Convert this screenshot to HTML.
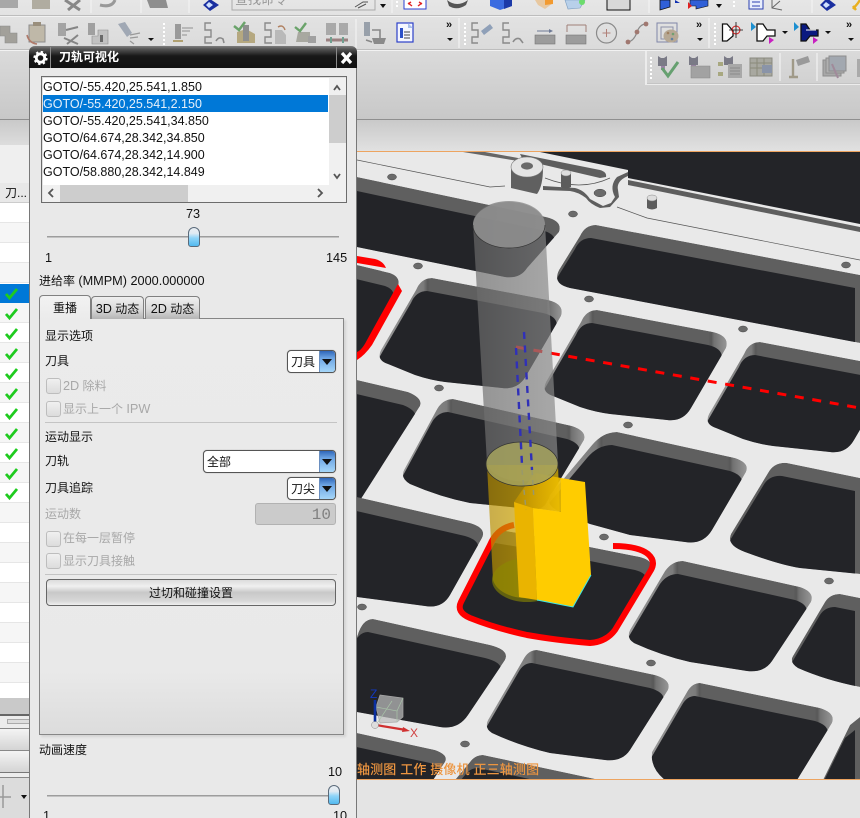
<!DOCTYPE html>
<html lang="zh">
<head>
<meta charset="utf-8">
<title>刀轨可视化</title>
<style>
html,body{margin:0;padding:0;background:#e0e0e0}
#page{position:relative;width:860px;height:818px;overflow:hidden;font-family:"Liberation Sans","Noto Sans CJK SC",sans-serif;font-size:12px;color:#111}
#page div,#page span{position:absolute;box-sizing:border-box}
i{font-style:normal;font-size:12.700px}
svg{position:absolute;left:0;top:0}
.t{line-height:18px;white-space:nowrap;height:16px}
.dis{color:#a8a8a8}
.row{left:1px;width:285px;height:17px;line-height:18px;white-space:nowrap;font-size:12.500px}
.cb{width:15px;height:16px;border:1px solid #bdbdbd;border-radius:3px;background:linear-gradient(#f0f0f0,#dcdcdc)}
.combo{background:#fff;border:1px solid #555;border-radius:4px;height:23px;line-height:23px;padding-left:3px;box-shadow:0 0 1px #999}
.drop{right:0;top:0;width:16px;height:21px;background:linear-gradient(#2f66b8 0,#6ea6e4 35%,#a5d6f8 100%);border-left:1px solid #6a8fc0;border-radius:0 3px 3px 0}
.drop:after{content:"";position:absolute;left:2px;top:8px;border:5.500px solid transparent;border-top:6px solid #111;border-bottom:0}
.thumb{width:12px;height:20px;border:1px solid #5a6a7a;border-radius:6px 6px 3px 3px;background:linear-gradient(#e9eef3 0,#e0eaf2 30%,#8fd4f8 55%,#52b9ef 100%)}
.track{height:3px;background:linear-gradient(#8a8a8a,#d8d8d8 70%,#fff)}
.tab{height:23px;border:1px solid #808080;border-bottom:0;border-radius:4px 4px 0 0;background:linear-gradient(#efefef,#dadada 55%,#b4b4b4);text-align:center;line-height:25px;white-space:nowrap}
</style>
</head>
<body>
<div id="page">

<!-- toolbar backdrop -->
<div style="left:0;top:0;width:860px;height:120px;background:linear-gradient(#e6e6e6,#d8d8d8 50%,#c8c8c8);border-bottom:1px solid #8f8f8f"></div>
<div style="left:0;top:120px;width:860px;height:32px;background:linear-gradient(#c9c9c9,#e2e2e2)"></div>
<div style="left:0;top:15px;width:860px;height:2px;background:#f2f2f2;border-top:1px solid #bdbdbd"></div>
<div style="left:0;top:49px;width:860px;height:2px;background:#f2f2f2;border-top:1px solid #bdbdbd"></div>
<div style="left:645px;top:83px;width:215px;height:2px;background:#ececec;border-top:1px solid #c4c4c4"></div>
<div style="left:645px;top:51px;width:2px;height:33px;background:#ececec"></div>
<div style="left:0;top:151px;width:860px;height:1px;background:#eda460"></div>
<div class="t" style="left:235px;top:-9px;color:#999;font-size:13px">查找命令</div>

<!-- left table -->
<div style="left:0;top:145px;width:30px;height:38px;background:#efefef"></div>
<div style="left:0;top:183px;width:30px;height:20px;background:#e8e8e8;border-bottom:1px solid #ccc"></div>
<div class="t" style="left:5px;top:184px">刀...</div>
<div style="left:0;top:203px;width:30px;height:495px;background:repeating-linear-gradient(#fff 0,#fff 19px,#e6e6e6 19px,#e6e6e6 20px,#f6f6f6 20px,#f6f6f6 39px,#e6e6e6 39px,#e6e6e6 40px)"></div>
<div style="left:0;top:284px;width:30px;height:19px;background:#0078d7"></div>
<div style="left:0;top:698px;width:30px;height:16px;background:#c9c9c9"></div>
<div style="left:0;top:714px;width:30px;height:2px;background:#666"></div>
<div style="left:0;top:716px;width:30px;height:12px;background:#ececec"></div>
<div style="left:7px;top:719px;width:23px;height:5px;background:#ddd;border:1px solid #aaa"></div>
<div style="left:0;top:728px;width:30px;height:22px;background:linear-gradient(#f4f4f4,#d4d4d4);border-top:1px solid #888;"></div>
<div style="left:0;top:750px;width:30px;height:23px;background:linear-gradient(#f4f4f4,#d4d4d4);border-top:1px solid #888;border-bottom:1px solid #777"></div>
<div style="left:0;top:773px;width:30px;height:45px;background:#dcdcdc;border-top:4px solid #ececec"></div>
<div style="left:0;top:777px;width:30px;height:1px;background:#888"></div>

<!-- viewport -->
<svg width="860" height="818" viewBox="0 0 860 818">
<defs>
<linearGradient id="gt" x1="0" x2="1" y1="0" y2="0"><stop offset="0" stop-color="#6a6a6a"/><stop offset="1" stop-color="#8a8a8a"/></linearGradient>
<linearGradient id="gy" x1="0" x2="1" y1="0" y2="0"><stop offset="0" stop-color="#b88c00"/><stop offset=".5" stop-color="#d8a800"/><stop offset="1" stop-color="#f0c000"/></linearGradient>
<linearGradient id="gy2" x1="0" x2="1" y1="0" y2="0"><stop offset="0" stop-color="#b88f00"/><stop offset="1" stop-color="#f0c400"/></linearGradient>
<linearGradient id="w"><stop offset="0" stop-color="#979797"/><stop offset=".24" stop-color="#7c7c7c"/><stop offset=".265" stop-color="#585858"/><stop offset=".275" stop-color="#5f5f5f"/><stop offset=".9" stop-color="#5f5f5f"/><stop offset=".915" stop-color="#585858"/><stop offset=".93" stop-color="#727272"/><stop offset="1" stop-color="#979797"/></linearGradient>
<path id="p1" d="M357,177 L546,217 Q563,221 559,232 L527,268 Q520,279 505,277 L357,247 Z"/>
<path id="p2" d="M596,225 L860,275 L860,343 L570,288 Q552,284 559,270 L580,236 Q585,225 596,225 Z"/>
<path id="p3" d="M357,265 L390,273 Q401,277 398,286 L367,345 Q360,357 357,358 Z"/>
<path id="p4" d="M432,278 L548,300 Q565,304 561,316 L526,376 Q518,390 502,388 L445,382 Q430,380 415,375 L388,364 Q376,360 381,350 L416,290 Q421,278 432,278 Z"/>
<path id="p7" d="M357,380 L408,392 Q423,398 420,406 L357,505 Z"/>
<path id="p8" d="M453,399 L572,426 Q587,431 584,440 L545,505 Q537,513 520,508 L470,503 Q440,497 410,484 Q400,478 404,470 L436,411 Q442,399 453,399 Z"/>
<path id="p9" d="M617,432 L735,458 Q750,463 746,472 L712,530 Q703,545 685,542 L630,535 Q612,530 590,524 L560,512 Q545,505 550,495 L592,445 Q603,432 617,432 Z"/>
<path id="p10" d="M787,463 L860,478 L860,574 L800,568 Q780,565 745,552 Q726,545 731,534 L768,473 Q774,462 787,463 Z"/>
<path id="p11" d="M357,497 L470,523 Q487,528 482,538 L450,595 Q442,609 425,606 L357,597 Z"/>
<path id="p12" d="M530,535 L640,557 Q655,561 651,571 L612,632 Q604,645 585,642 L527,635 Q495,628 468,617 Q454,610 460,600 L500,530 Z"/>
<path id="p13" d="M373,619 L490,645 Q510,650 505,660 L468,715 Q458,730 440,727 L357,712 L357,637 Q362,619 373,619 Z"/>
<path id="p14" d="M537,650 L655,675 Q672,680 668,690 L630,750 Q622,762 605,760 L550,753 Q520,746 492,733 Q484,728 488,720 L523,660 Q528,650 537,650 Z"/>
<path id="p15" d="M683,561 L800,587 Q815,592 811,602 L772,661 Q764,673 747,671 L690,662 Q660,655 634,643 Q626,638 630,630 L665,571 Q672,561 683,561 Z"/>
<path id="p16" d="M840,594 L860,598 L860,687 Q825,680 798,668 Q789,662 793,656 L825,602 Q830,594 840,594 Z"/>
<path id="p17" d="M700,683 L820,708 Q836,713 832,723 L797,780 L665,780 Q650,768 652,752 L687,692 Q692,683 700,683 Z"/>
<path id="p18" d="M860,717 L850,725 L823,780 L860,780 Z"/>
<path id="p19" d="M357,733 L435,750 Q449,755 445,762 L433,780 L357,780 Z"/>
<path id="p20" d="M483,755 L600,780 L455,780 L470,762 Q475,755 483,755 Z"/>
<clipPath id="c1"><use href="#p1"/></clipPath><clipPath id="c2"><use href="#p2"/></clipPath>
<clipPath id="c3"><use href="#p3"/></clipPath><clipPath id="c4"><use href="#p4"/></clipPath>
<clipPath id="c7"><use href="#p7"/></clipPath><clipPath id="c8"><use href="#p8"/></clipPath>
<clipPath id="c9"><use href="#p9"/></clipPath><clipPath id="c10"><use href="#p10"/></clipPath>
<clipPath id="c11"><use href="#p11"/></clipPath><clipPath id="c12"><use href="#p12"/></clipPath>
<clipPath id="c13"><use href="#p13"/></clipPath><clipPath id="c14"><use href="#p14"/></clipPath>
<clipPath id="c15"><use href="#p15"/></clipPath><clipPath id="c16"><use href="#p16"/></clipPath>
<clipPath id="c17"><use href="#p17"/></clipPath><clipPath id="c18"><use href="#p18"/></clipPath>
<clipPath id="c19"><use href="#p19"/></clipPath><clipPath id="c20"><use href="#p20"/></clipPath>
<clipPath id="vp"><rect x="357" y="152" width="503" height="627"/></clipPath>
</defs>

<g clip-path="url(#vp)">
<rect x="357" y="152" width="503" height="627" fill="#e9e9e9"/>
<!-- dark background at top right -->
<path d="M540,152 L628,170 L628,178 L860,224 L860,152 Z" fill="#232428"/>
<path d="M628,180 L860,227 L860,232 L628,185 Z" fill="#5e5e5e"/>
<!-- slot -->
<path d="M463,152 L485,152 L518,158 L518,161 Z" fill="#666"/>
<path d="M520,154 L600,170 Q607,172 606,177 L600,178 L523,160 Z" fill="#5e5e5e"/>
<!-- arm and notch -->
<path d="M543,186 L575,188 Q584,190 590,199 L603,206 L611,203 L615,197 Q609,186 617,177 L628,172 L628,176 Q616,181 618,190 L619,197 L610,207 L600,208 Q590,204 586,198 Q578,192 570,191 L543,190 Z" fill="#5e5e5e"/>
<!-- thin lines on plate -->
<path d="M357,160 L490,187 L505,186 M617,207 L647,218 L860,260 M545,178 Q580,192 610,178" fill="none" stroke="#555" stroke-width=".7"/>
<!-- boss -->
<path d="M511,168 V188 L537,194 Q543,186 543,168 Z" fill="#606060"/>
<ellipse cx="527" cy="167" rx="16" ry="10" fill="#e4e4e4" stroke="#777" stroke-width=".6"/>
<ellipse cx="527" cy="166" rx="6" ry="3.600" fill="#6a6a6a"/>
<!-- pins -->
<path d="M561,173 L561,187 Q566,190 571,187 L571,173 Z" fill="#5c5c5c"/><ellipse cx="566" cy="173" rx="5" ry="3" fill="#ddd" stroke="#888" stroke-width=".5"/>
<path d="M647,198 L647,208 Q652,211 657,208 L657,198 Z" fill="#5c5c5c"/><ellipse cx="652" cy="198" rx="5" ry="3" fill="#ddd" stroke="#888" stroke-width=".5"/>

<!-- pockets -->
<g clip-path="url(#c1)"><use href="#p1" fill="#5f5f5f"/><use href="#p1" transform="translate(-5,13)" fill="#232428"/></g>
<g clip-path="url(#c2)"><use href="#p2" fill="#5f5f5f"/><use href="#p2" transform="translate(-5,13)" fill="#232428"/></g>
<g clip-path="url(#c3)"><use href="#p3" fill="#5f5f5f"/><use href="#p3" transform="translate(-5,13)" fill="#232428"/></g>
<g clip-path="url(#c4)"><use href="#p4" fill="url(#w)"/><use href="#p4" transform="translate(-5,13)" fill="#232428"/></g>
<g transform="translate(165,32)"><g clip-path="url(#c4)"><use href="#p4" fill="url(#w)"/><use href="#p4" transform="translate(-5,13)" fill="#232428"/></g></g>
<g transform="translate(328,64)"><g clip-path="url(#c4)"><use href="#p4" fill="url(#w)"/><use href="#p4" transform="translate(-5,13)" fill="#232428"/></g></g>
<g clip-path="url(#c7)"><use href="#p7" fill="#5f5f5f"/><use href="#p7" transform="translate(-5,13)" fill="#232428"/></g>
<g clip-path="url(#c8)"><use href="#p8" fill="url(#w)"/><use href="#p8" transform="translate(-5,13)" fill="#232428"/></g>
<g clip-path="url(#c9)"><use href="#p9" fill="url(#w)"/><use href="#p9" transform="translate(-5,13)" fill="#232428"/></g>
<g clip-path="url(#c10)"><use href="#p10" fill="#5f5f5f"/><use href="#p10" transform="translate(-5,13)" fill="#232428"/></g>
<g clip-path="url(#c11)"><use href="#p11" fill="#5f5f5f"/><use href="#p11" transform="translate(-5,13)" fill="#232428"/></g>
<g clip-path="url(#c12)"><use href="#p12" fill="#5f5f5f"/><use href="#p12" transform="translate(-5,13)" fill="#232428"/></g>
<g clip-path="url(#c13)"><use href="#p13" fill="#5f5f5f"/><use href="#p13" transform="translate(-5,13)" fill="#232428"/></g>
<g clip-path="url(#c14)"><use href="#p14" fill="url(#w)"/><use href="#p14" transform="translate(-5,13)" fill="#232428"/></g>
<g clip-path="url(#c15)"><use href="#p15" fill="url(#w)"/><use href="#p15" transform="translate(-5,13)" fill="#232428"/></g>
<g clip-path="url(#c16)"><use href="#p16" fill="#5f5f5f"/><use href="#p16" transform="translate(-5,13)" fill="#232428"/></g>
<g clip-path="url(#c17)"><use href="#p17" fill="url(#w)"/><use href="#p17" transform="translate(-5,13)" fill="#232428"/></g>
<g clip-path="url(#c18)"><use href="#p18" fill="#5f5f5f"/><use href="#p18" transform="translate(-5,13)" fill="#232428"/></g>
<g clip-path="url(#c19)"><use href="#p19" fill="#5f5f5f"/><use href="#p19" transform="translate(-5,13)" fill="#232428"/></g>
<g clip-path="url(#c20)"><use href="#p20" fill="#5f5f5f"/><use href="#p20" transform="translate(-5,13)" fill="#232428"/></g>

<!-- holes -->
<g fill="#6a6a6a" stroke="#444" stroke-width=".5">
<ellipse cx="392" cy="177" rx="4.500" ry="3"/><ellipse cx="418" cy="266" rx="4.500" ry="3"/><ellipse cx="439" cy="388" rx="4.500" ry="3"/>
<ellipse cx="573" cy="214" rx="4.500" ry="3"/><ellipse cx="589" cy="299" rx="4.500" ry="3"/><ellipse cx="628" cy="425" rx="4.500" ry="3"/>
<ellipse cx="743" cy="329" rx="4.500" ry="3"/><ellipse cx="846" cy="265" rx="4.500" ry="3"/><ellipse cx="362" cy="607" rx="4.500" ry="3"/>
<ellipse cx="604" cy="537" rx="4.500" ry="3"/><ellipse cx="829" cy="581" rx="4.500" ry="3"/><ellipse cx="651" cy="663" rx="4.500" ry="3"/>
<ellipse cx="465" cy="744" rx="4.500" ry="3"/><ellipse cx="600" cy="193" rx="6" ry="3.800"/>
</g>

<!-- red toolpaths -->
<path d="M357,256 L375,259 Q383,261 386,268 L357,263 Z" fill="#f00"/>
<path d="M398,284 L402,291 L372,345 Q365,355 357,360 L357,352 Q362,350 367,340 Z" fill="#f00"/>
<path d="M613,546 Q638,546 648,554 Q656,561 651,570 L615,630 Q606,642 590,643 Q555,640 527,635 Q495,628 470,618 Q456,612 461,602 L490,545 Q497,528 514,525" fill="none" stroke="#f00" stroke-width="6" stroke-linejoin="round"/>
<path d="M516,347 L860,408" fill="none" stroke="#f00" stroke-width="3" stroke-dasharray="9 8.700"/>

<!-- transparent tool -->
<path d="M473,224 L487,463 A36,22 0 0 0 558,463 L545,224 A36,23 0 0 0 473,224 Z" fill="url(#gt)" fill-opacity=".68"/>
<ellipse cx="509" cy="225" rx="36" ry="23" fill="#8e8e8e" fill-opacity=".9"/>
<path d="M473,225 A36,23 0 0 0 545,225" fill="none" stroke="#333" stroke-width=".7"/>

<!-- yellow holder -->
<path d="M487,465 L493,580 A35,22 0 0 0 562,580 L558,465 Z" fill="url(#gy2)" fill-opacity=".68"/>
<ellipse cx="527" cy="580" rx="35" ry="22" fill="#8c8a00" fill-opacity=".6"/>
<!-- solid yellow cutter -->
<path d="M523,489 L535,473 L561,478 L561,512 L533,508 L514,502 Z" fill="url(#gy)" fill-opacity=".9"/>
<ellipse cx="522" cy="464" rx="36" ry="22" fill="#a5a25e" fill-opacity=".85" stroke="#333" stroke-width=".7"/>
<path d="M514,502 L533,508 L537,600 L519,597 Z" fill="#eab400"/>
<path d="M533,508 L561,512 L561,478 L585,482 L591,575 L573,607 L537,600 Z" fill="#ffcc00"/>
<path d="M537,600 L573,607 L591,575" fill="none" stroke="#3de8e8" stroke-width="1"/>
<!-- blue dashes -->
<path d="M516,348 L522,465" fill="none" stroke="#3030b8" stroke-width="2.400" stroke-dasharray="7 6.500"/>
<path d="M524,332 L532,470" fill="none" stroke="#3030b8" stroke-width="2.400" stroke-dasharray="7 6.500"/>
<path d="M522,470 L526,510 M532,470 L534,500" fill="none" stroke="#99996a" stroke-width="1.500" stroke-dasharray="5 5"/>

<!-- triad -->
<path d="M380,695 L403,698 L403,717 L397,722 L380,723 L376,707 Z" fill="#bdbdbd" fill-opacity=".72" stroke="#a8a8a8" stroke-width=".7"/>
<path d="M376,707 L397,711 L403,698 M397,711 L397,722 M378,722 L392,701" stroke="#a9c4a9" stroke-width=".7" fill="none"/>
<path d="M375,700 L375,724" stroke="#0a2fa0" stroke-width="2.600"/>
<path d="M376,725 L406,730" stroke="#d03030" stroke-width="2.200"/><path d="M403,727 L410,731 L402,732 Z" fill="#d03030"/>
<circle cx="375" cy="725" r="3.500" fill="#ddd" stroke="#888" stroke-width=".5"/>
<text x="370" y="698" font-family="Liberation Sans" font-size="12" fill="#1238c0">Z</text>
<text x="410" y="737" font-family="Liberation Sans" font-size="12" fill="#d04040">X</text>
<text x="357" y="774" font-family="Liberation Sans,Noto Sans CJK SC,sans-serif" font-size="13" letter-spacing=".15" fill="#ec9540" font-weight="500">轴测图 工作 摄像机 正三轴测图</text>
</g>
<rect x="357" y="779" width="503" height="1" fill="#eda460"/>
<rect x="357" y="780" width="503" height="38" fill="#e4e4e4"/>

<!-- table checks -->
<g fill="none" stroke="#1fcb1f" stroke-width="2.800">
<path d="M6,294 L9.500,298 L17,289"/><path d="M6,314 L9.500,318 L17,309"/><path d="M6,334 L9.500,338 L17,329"/><path d="M6,354 L9.500,358 L17,349"/>
<path d="M6,374 L9.500,378 L17,369"/><path d="M6,394 L9.500,398 L17,389"/><path d="M6,414 L9.500,418 L17,409"/><path d="M6,434 L9.500,438 L17,429"/>
<path d="M6,454 L9.500,458 L17,449"/><path d="M6,474 L9.500,478 L17,469"/><path d="M6,494 L9.500,498 L17,489"/>
</g>
<path d="M3,785 L3,808 M0,797 L11,797" stroke="#999" stroke-width="1.500" fill="none"/>
<path d="M21,795 L27,795 L24,799 Z" fill="#111"/>

<!-- ROW 1 icons -->
<g>
<path d="M0,0 H18 V8 H0 Z" fill="#a8a8a8"/><path d="M32,0 H50 V9 H32 Z" fill="#b0aca0"/>
<path d="M65,0 L80,10 M80,0 L68,10" stroke="#888" stroke-width="3"/>
<path d="M100,5 Q112,8 115,0" stroke="#999" stroke-width="3" fill="none"/>
<path d="M147,0 H166 L168,8 H150 Z" fill="#8e8e8e"/>
<path d="M210,-1 L219,5 L210,11 L203,5 Z" fill="#1a2fa0"/><path d="M209,2 L213,5 L209,8 L206,5 Z" fill="#cfe0ff"/>
<rect x="232" y="-2" width="143" height="12" fill="none" stroke="#aaa"/>
<path d="M355,7 L363,2 L368,2 M358,8 L366,4" stroke="#555" fill="none"/>
<path d="M380,4 H386 L383,8 Z" fill="#111"/>
<rect x="404" y="-2" width="22" height="11" fill="#fff" stroke="#2c40d0"/>
<path d="M408,4 L411,2 M422,4 L419,2 M408,3 L412,6 M422,3 L418,6" stroke="#e02020" stroke-width="1.400"/>
<path d="M447,0 Q457,8 468,0 L466,5 Q457,11 449,6 Z" fill="#555"/>
<path d="M490,0 H512 V6 L500,10 L490,6 Z" fill="#3c6ce0"/><path d="M504,0 H512 V6 L504,9 Z" fill="#1c3aa8"/>
<path d="M535,0 H553 V3 L545,9 L538,5 Z" fill="#e8c8a0"/><path d="M545,0 H553 V4 L545,5 Z" fill="#f29a30"/>
<path d="M565,0 H585 L580,8 L568,9 Z" fill="#b8d0ea" stroke="#7a9cc0" stroke-width=".6"/><circle cx="582" cy="2" r="3" fill="#6cdc6c"/>
<rect x="607" y="-3" width="23" height="13" fill="#d8d8d8" stroke="#111"/>
<path d="M660,0 V10 L670,7 V0 Z" fill="#3060d8" stroke="#111" stroke-width=".8"/><path d="M675,0 L680,3 L675,3 Z" fill="#1030b0"/>
<path d="M690,0 V6 L696,6 V9 L708,6 V0 Z" fill="#3060d8" stroke="#111" stroke-width=".6"/><path d="M688,2 L692,6 L688,9 Z" fill="#e02020"/>
<path d="M716,4 H722 L719,8 Z" fill="#111"/>
<rect x="749" y="-2" width="14" height="11" fill="#e8eefc" stroke="#2c40b0"/>
<path d="M752,2 H760 M752,6 H760" stroke="#2c40b0"/>
<path d="M772,0 V8 L782,10 M772,8 L780,1" stroke="#666" fill="none"/>
<path d="M827,-2 L836,5 L827,11 L820,5 Z" fill="#1a2fa0"/><path d="M826,2 L830,5 L826,8 L823,5 Z" fill="#cfe0ff"/>
<path d="M853,9 L858,3 L860,0 M853,6 L856,10" stroke="#e8b020" stroke-width="2.400" fill="none"/>
<g fill="#fff"><rect x="396" y="1" width="2" height="2"/><rect x="396" y="5" width="2" height="2"/><rect x="733" y="1" width="2" height="2"/><rect x="733" y="5" width="2" height="2"/></g>
<path d="M91,0 V13 M141,0 V13 M189,0 V13 M392,0 V13 M649,0 V13 M812,0 V13" stroke="#f2f2f2" stroke-width="1.200"/>
</g>

<!-- ROW 2 icons -->
<g>
<path d="M0,26 H10 V33 H17 V43 H5 V36 H0 Z" fill="#a2a09a" stroke="#8b8b8b" stroke-width=".6"/>
<rect x="29" y="25" width="16" height="17" fill="#bfb8a8" stroke="#8d8d8d"/><rect x="33" y="22" width="8" height="4" fill="#9a8f7c"/>
<path d="M27,35 Q29,43 37,44" stroke="#b07a6a" stroke-width="1.600" fill="none"/>
<rect x="58" y="23" width="8" height="13" fill="#a4a4a4"/><path d="M66,30 L78,27 M64,38 L78,44 M78,35 L67,44" stroke="#858585" stroke-width="2"/>
<rect x="88" y="23" width="7" height="12" fill="#a0a0a0"/><path d="M98,30 H108 V44 H92 V36 H98 Z" fill="#c2c2c2" stroke="#8e8e8e" stroke-width=".6"/><rect x="100" y="35" width="3" height="7" fill="#6a6a6a"/>
<path d="M118,24 L125,22 L132,33 L127,37 Z" fill="#a0a8b4"/><path d="M130,35 L140,33 M130,38 L138,37 M130,41 L134,44" stroke="#999" stroke-width="1.300"/>
<path d="M148,38 H154 L151,41 Z" fill="#111"/>
<g fill="#fff"><rect x="163" y="23" width="2" height="2"/><rect x="163" y="27" width="2" height="2"/><rect x="163" y="31" width="2" height="2"/><rect x="163" y="35" width="2" height="2"/><rect x="163" y="39" width="2" height="2"/><rect x="163" y="43" width="2" height="2"/></g>
<rect x="175" y="24" width="6" height="15" fill="#9a9a9a"/><path d="M182,28 H193 M182,31 L190,31 M182,35 L187,35" stroke="#a0a0a0" stroke-width="1.200"/><path d="M173,41 L183,41" stroke="#b0a070" stroke-width="2"/>
<path d="M211,23 H205 V30 H211 V37 H205 V43 H212" fill="none" stroke="#8a8a8a" stroke-width="1.400"/><path d="M216,41 Q219,36 223,39 L224,43" fill="none" stroke="#8a8a8a" stroke-width="1.600"/>
<path d="M237,32 L246,29 L255,34 V43 H237 Z" fill="#b5a880"/><rect x="243" y="25" width="6" height="16" fill="#8e8e8e"/><path d="M234,26 L239,30 L245,22" stroke="#6aa36a" stroke-width="2.500" fill="none"/>
<path d="M271,23 H265 V30 H271 V37 H265 V43 H272" fill="none" stroke="#8a8a8a" stroke-width="1.400"/><path d="M275,30 H282 L286,35 V44 H275 Z" fill="#b9b9b9"/><path d="M278,27 Q283,24 285,30" stroke="#b08060" fill="none" stroke-width="1.400"/>
<path d="M298,32 H310 V42 H296 Z" fill="#a8a8a0"/><path d="M295,27 L300,31 L306,23" stroke="#6aa36a" stroke-width="2.400" fill="none"/><rect x="308" y="36" width="8" height="7" fill="#a0a0a0"/>
<path d="M326,23 H336 V35 H326 Z M339,23 H348 V35 H339 Z" fill="#a9a9a9"/><path d="M326,40 H348" stroke="#9a8080" stroke-width="3"/><path d="M331,37 V43 M343,37 V43" stroke="#70a090" stroke-width="2"/>
<path d="M356,19 V48" stroke="#f2f2f2" stroke-width="1.200"/>
<rect x="364" y="22" width="6" height="14" fill="#98a0aa"/><path d="M372,30 H380 V38 M366,40 L372,42" stroke="#888" stroke-width="1.600" fill="none"/><path d="M372,38 H386 L384,44 H374 Z" fill="#8a8a8a"/>
<rect x="397" y="23" width="16" height="19" fill="#f4f6ff" stroke="#2c40c8" stroke-width="1.200"/><rect x="400" y="28" width="3" height="10" fill="#2c50c8"/><path d="M404,32 H410 M404,35 H410 M404,38 H410" stroke="#444"/><path d="M408,23 L413,28 H408 Z" fill="#aac0ea"/>
<text x="446" y="28" font-family="Liberation Sans" font-size="11" font-weight="bold" fill="#111">»</text>
<path d="M447,38 H453 L450,41 Z" fill="#111"/>
<path d="M459,18 V48" stroke="#f2f2f2" stroke-width="1.200"/>
<g fill="#fff"><rect x="464" y="23" width="2" height="2"/><rect x="464" y="27" width="2" height="2"/><rect x="464" y="31" width="2" height="2"/><rect x="464" y="35" width="2" height="2"/><rect x="464" y="39" width="2" height="2"/><rect x="464" y="43" width="2" height="2"/></g>
<path d="M478,23 H472 V30 H478 V37 H472 V43 H478" fill="none" stroke="#8a8a8a" stroke-width="1.400"/><path d="M481,31 L490,24 L493,28 L484,35 Z" fill="#8fa0b8"/>
<path d="M509,23 H503 V30 H509 V37 H503 V43 H510" fill="none" stroke="#8a8a8a" stroke-width="1.400"/><path d="M513,42 Q516,37 520,39 L523,43" fill="none" stroke="#8a8a8a" stroke-width="1.600"/>
<rect x="535" y="35" width="20" height="9" fill="#9c9c9c" stroke="#777" stroke-width=".6"/><path d="M537,31 H551" stroke="#6e7a96"/><path d="M549,29 L553,31 L549,33 Z" fill="#6e7a96"/>
<rect x="566" y="35" width="20" height="9" fill="#9c9c9c" stroke="#777" stroke-width=".6"/><path d="M567,25 H586 M567,25 V32 M586,25 V32" stroke="#a08078" fill="none"/>
<circle cx="606.500" cy="33" r="10" fill="none" stroke="#8a8a8a" stroke-width="1.200"/><path d="M606.500,29 V37 M602.500,33 H610.500" stroke="#b08078"/>
<path d="M628,42 Q634,41 637,32 Q640,24 646,24" fill="none" stroke="#8a8a8a" stroke-width="1.200"/><circle cx="628" cy="42" r="2.400" fill="#a07870"/><circle cx="637" cy="32" r="2.400" fill="#a07870"/><circle cx="646" cy="24" r="2.400" fill="#a07870"/>
<rect x="657" y="23" width="20" height="19" fill="none" stroke="#7f86a8"/><rect x="661" y="27" width="12" height="12" fill="none" stroke="#8c90a8"/>
<ellipse cx="671" cy="36" rx="7.500" ry="6.500" fill="#b6a894"/><circle cx="668" cy="33" r="1.300" fill="#a08060"/><circle cx="673" cy="34" r="1.300" fill="#70a070"/><circle cx="672" cy="39" r="1.300" fill="#6080a0"/>
<text x="696" y="28" font-family="Liberation Sans" font-size="11" font-weight="bold" fill="#111">»</text>
<path d="M697,38 H703 L700,41 Z" fill="#111"/>
<path d="M709,18 V48" stroke="#f2f2f2" stroke-width="1.200"/>
<g fill="#fff"><rect x="714" y="23" width="2" height="2"/><rect x="714" y="27" width="2" height="2"/><rect x="714" y="31" width="2" height="2"/><rect x="714" y="35" width="2" height="2"/><rect x="714" y="39" width="2" height="2"/><rect x="714" y="43" width="2" height="2"/></g>
<path d="M722.500,24 V41 H727 L733,36 V31 L727,24 Z" fill="#fff" stroke="#111" stroke-width="1.300"/>
<circle cx="736" cy="30" r="4" fill="none" stroke="#d81818" stroke-width="1"/><path d="M736,22 V38 M729,30 H743" stroke="#111" stroke-width=".8"/>
<path d="M757,24 V41 H763 L767,36 H775 V30 H767 L763,24 Z" fill="#fff" stroke="#111" stroke-width="1.300"/>
<path d="M751,22 L756,27 L751,31 Z" fill="#1c8fd0"/><path d="M769,37 L774,40 L769,44 Z" fill="#c820c0"/>
<path d="M782,31 H788 L785,34 Z" fill="#111"/>
<path d="M801,24 V41 H806 L810,36 H818 V30 H810 L806,24 Z" fill="#0a1a80" stroke="#111" stroke-width="1.300"/><path d="M806,30 H816" stroke="#fff"/>
<path d="M794,22 L799,27 L794,31 Z" fill="#1c8fd0"/><path d="M813,37 L818,40 L813,44 Z" fill="#c820c0"/>
<path d="M825,31 H831 L828,34 Z" fill="#111"/>
<text x="846" y="28" font-family="Liberation Sans" font-size="11" font-weight="bold" fill="#111">»</text>
<path d="M848,38 H854 L851,41 Z" fill="#111"/>
</g>

<!-- ROW 3 icons -->
<g>
<g fill="#fff"><rect x="650" y="57" width="2" height="2"/><rect x="650" y="61" width="2" height="2"/><rect x="650" y="65" width="2" height="2"/><rect x="650" y="69" width="2" height="2"/><rect x="650" y="73" width="2" height="2"/><rect x="650" y="77" width="2" height="2"/></g>
<path d="M658,56 L661,58 H664 L667,56 V66 H658 Z" fill="#7a7a86"/><rect x="661" y="66" width="4" height="4" fill="#9a80a6"/>
<path d="M662,68 L668,76 L678,62" stroke="#66a070" stroke-width="3" fill="none"/>
<path d="M689,56 L692,58 H695 L698,56 V65 H689 Z" fill="#7a7a86"/><rect x="691" y="65" width="5" height="4" fill="#9a80a6"/><path d="M691,66 H710 V78 H691 Z" fill="#a2a2a2" stroke="#8a8a8a" stroke-width=".6"/>
<path d="M724,56 L727,58 H730 L733,56 V65 H724 Z" fill="#7a7a86"/><rect x="718" y="62" width="5" height="4" fill="#a8a880"/><rect x="718" y="72" width="5" height="4" fill="#a8a880"/><rect x="728" y="64" width="14" height="14" fill="#a8a8a8"/><path d="M730,68 H740 M730,71 H740 M730,74 H740" stroke="#8a8a8a"/>
<rect x="750" y="58" width="22" height="18" fill="#a8a8a0" stroke="#8a8a80"/><path d="M750,63 H772 M750,68 H772 M757,58 V76 M764,58 V76" stroke="#8a8a7a"/><path d="M762,65 H772 V73 H762 Z" fill="#8a94a8"/>
<path d="M780,53 V81" stroke="#f2f2f2" stroke-width="1.200"/>
<path d="M793,59 V77 M789,77 H798" stroke="#a09a88" stroke-width="2.400"/><path d="M796,60 L808,56 L810,62 L798,66 Z" fill="#9a9a9a"/>
<path d="M817,53 V81" stroke="#f2f2f2" stroke-width="1.200"/>
<rect x="823" y="60" width="18" height="16" fill="#a8a8a8" stroke="#8d8d8d"/><rect x="826" y="58" width="18" height="15" fill="#b0b0b0" stroke="#8d8d8d"/><rect x="829" y="56" width="17" height="15" fill="#a2a8b0" stroke="#8d8d8d"/>
<path d="M832,64 L838,78" stroke="#a08a9a" stroke-width="2"/>
<rect x="857" y="59" width="5" height="18" fill="#aaa"/>
</g>
</svg>

<!-- DIALOG -->
<div style="left:29px;top:46px;width:328px;height:772px;background:#e9e9e9;border-left:1.500px solid #787878;border-right:1.500px solid #787878;border-radius:6px 6px 0 0"></div>
<div style="left:29px;top:46px;width:328px;height:22px;background:linear-gradient(#7e7e7e 0,#555 3px,#2a2a2a 8px,#181818 10px,#111 100%);border-radius:6px 6px 0 0"></div>
<div style="left:50px;top:47px;width:1px;height:21px;background:#8a8a8a"></div>
<div style="left:336px;top:47px;width:1px;height:21px;background:#8a8a8a"></div>
<svg width="860" height="818" viewBox="0 0 860 818">
<circle cx="40.500" cy="58" r="4.200" fill="none" stroke="#fff" stroke-width="2.800"/>
<circle cx="40.500" cy="58" r="6.200" fill="none" stroke="#fff" stroke-width="1.800" stroke-dasharray="2.400 2.470"/>
<path d="M342,53 L351,63 M351,53 L342,63" stroke="#fff" stroke-width="3.200"/>
</svg>
<div class="t" style="left:59px;top:48px;color:#fff;font-weight:bold;font-size:12px">刀轨可视化</div>

<!-- listbox -->
<div style="left:41px;top:76px;width:306px;height:127px;background:#fff;border:1px solid #6c6c6c;box-shadow:inset 0 0 0 1px #e0e0e0">
  <div class="row" style="top:1px">GOTO/-55.420,25.541,1.850</div>
  <div style="left:1px;top:18px;width:285px;height:17px;background:#0078d7"></div>
  <div class="row" style="top:18px;color:#e6f0fa">GOTO/-55.420,25.541,2.150</div>
  <div class="row" style="top:35px">GOTO/-55.420,25.541,34.850</div>
  <div class="row" style="top:52px">GOTO/64.674,28.342,34.850</div>
  <div class="row" style="top:69px">GOTO/64.674,28.342,14.900</div>
  <div class="row" style="top:86px">GOTO/58.880,28.342,14.849</div>
  <div style="left:287px;top:1px;width:17px;height:108px;background:#f0f0f0"></div>
  <div style="left:287px;top:18px;width:17px;height:48px;background:#cdcdcd"></div>
  <div style="left:1px;top:108px;width:303px;height:17px;background:#f0f0f0"></div>
  <div style="left:18px;top:108px;width:128px;height:17px;background:#cdcdcd"></div>
</div>
<svg width="860" height="818" viewBox="0 0 860 818">
<path d="M334,90 L337,86 L340,90 M334,174 L337,178 L340,174 M53,189 L49,193 L53,197 M318,189 L322,193 L318,197" fill="none" stroke="#555" stroke-width="1.800"/>
</svg>

<!-- slider 1 -->
<div class="t" style="left:186px;top:205px"><i>73</i></div>
<div class="track" style="left:47px;top:236px;width:292px"></div>
<div class="thumb" style="left:188px;top:227px"></div>
<div class="t" style="left:45px;top:249px"><i>1</i></div>
<div class="t" style="left:326px;top:249px"><i>145</i></div>
<div class="t" style="left:39px;top:272px">进给率 <i>(MMPM) 2000.000000</i></div>

<!-- tabs -->
<div style="left:39px;top:318px;width:305px;height:417px;background:linear-gradient(#ebebeb 0,#e9e9e9 85%,#dcdcdc 100%);border:1px solid #868686;box-shadow:2px 2px 2px #d4d4d4"></div>
<div class="tab" style="left:91px;top:296px;width:53px"><i>3D</i> 动态</div>
<div class="tab" style="left:145px;top:296px;width:55px"><i>2D</i> 动态</div>
<div class="tab" style="left:39px;top:295px;width:52px;height:24px;background:linear-gradient(#f2f2f2,#ebebeb);z-index:2">重播</div>

<div class="t" style="left:45px;top:327px">显示选项</div>
<div class="t" style="left:45px;top:352px">刀具</div>
<div class="combo" style="left:287px;top:350px;width:49px">刀具<div class="drop"></div></div>
<div class="cb" style="left:46px;top:378px"></div>
<div class="t dis" style="left:63px;top:377px"><i>2D</i> 除料</div>
<div class="cb" style="left:46px;top:401px"></div>
<div class="t dis" style="left:63px;top:400px">显示上一个 <i>IPW</i></div>
<div style="left:45px;top:422px;width:292px;height:1px;background:#c4c4c4"></div>
<div class="t" style="left:45px;top:428px">运动显示</div>
<div class="t" style="left:45px;top:452px">刀轨</div>
<div class="combo" style="left:203px;top:450px;width:133px">全部<div class="drop"></div></div>
<div class="t" style="left:45px;top:479px">刀具追踪</div>
<div class="combo" style="left:287px;top:477px;width:49px">刀尖<div class="drop"></div></div>
<div class="t dis" style="left:45px;top:505px">运动数</div>
<div style="left:255px;top:503px;width:81px;height:22px;background:#cbcbcb;border:1px solid #b2b2b2;border-radius:3px;text-align:right;padding-right:4px;line-height:22px;color:#808080;font-size:16px;font-family:'Liberation Mono',monospace">10</div>
<div class="cb" style="left:46px;top:531px"></div>
<div class="t dis" style="left:63px;top:529px">在每一层暂停</div>
<div class="cb" style="left:46px;top:553px"></div>
<div class="t dis" style="left:63px;top:552px">显示刀具接触</div>
<div style="left:45px;top:574px;width:292px;height:1px;background:#c4c4c4"></div>
<div style="left:46px;top:579px;width:290px;height:27px;border:1px solid #666;border-radius:4px;background:linear-gradient(#dcdcdc 0,#f0f0f0 25%,#c8c8c8 50%,#d8d8d8 85%,#efefef 100%);text-align:center;line-height:27px">过切和碰撞设置</div>

<div class="t" style="left:39px;top:741px">动画速度</div>
<div class="t" style="left:328px;top:763px"><i>10</i></div>
<div class="track" style="left:47px;top:795px;width:286px"></div>
<div class="thumb" style="left:328px;top:785px"></div>
<div class="t" style="left:43px;top:807px"><i>1</i></div>
<div class="t" style="left:333px;top:807px"><i>10</i></div>

</div>
</body>
</html>
